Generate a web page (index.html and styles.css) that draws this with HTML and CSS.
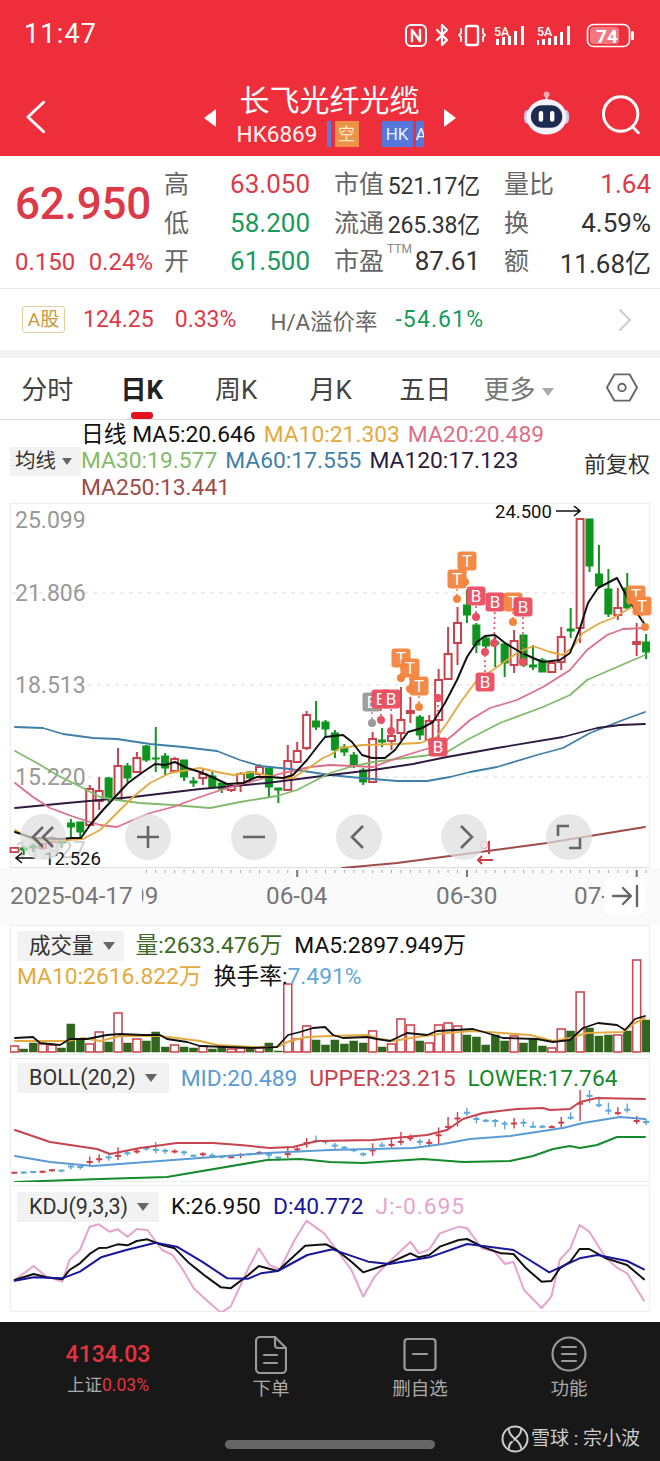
FILE: index.html
```html
<!DOCTYPE html>
<html lang="zh-CN">
<head>
    <meta charset="UTF-8">
    <meta name="viewport" content="width=device-width, initial-scale=1.0">
    <title>长飞光纤光缆 HK6869</title>
    <link rel="stylesheet" href="styles.css">
</head>
<body>
    <header class="topbar">
        <div class="status-row">
            <span class="clock">11:47</span>
            <svg class="status-icons" viewBox="400 20 240 30" width="240" height="30">
                <g fill="none" stroke="#fff" stroke-width="2" stroke-linecap="round" stroke-linejoin="round">
                    <rect x="406" y="25" width="20" height="21" rx="5"/>
                    <path d="M412 41V30l8 11V30" stroke-width="2.4"/>
                    <path d="M437 30l10 10-5 5V25l5 5-10 10" stroke-width="2.2"/>
                    <rect x="466" y="26" width="12" height="19" rx="2" stroke-width="2.4"/>
                    <path d="M461 29v4l-2 2 2 2v4M483 29v4l2 2-2 2v4" stroke-width="1.8"/>
                </g>
                <g fill="#fff">
                    <text class="net" x="494" y="36">5A</text>
                    <rect x="496" y="39" width="3" height="6"/><rect x="502" y="37" width="3" height="8"/>
                    <rect x="508" y="36" width="3" height="9"/><rect x="514" y="31" width="3" height="14"/>
                    <rect x="521" y="26" width="3" height="19"/>
                    <text class="net" x="537" y="36">5A</text>
                    <rect x="537" y="40" width="2" height="5"/><rect x="542" y="39" width="3" height="6"/>
                    <rect x="548" y="38" width="3" height="7"/><rect x="554" y="36" width="3" height="9"/>
                    <rect x="560" y="32" width="3" height="13"/><rect x="567" y="26" width="3" height="19"/>
                </g>
                <rect x="587.5" y="24.5" width="42" height="22" rx="6" fill="none" stroke="#fff" stroke-width="1.6"/>
                <rect x="590" y="27" width="29" height="17" rx="4" fill="#fff" opacity=".35"/>
                <rect x="631" y="31" width="3" height="9" rx="1.5" fill="#fff"/>
                <text class="batt" x="607" y="43" text-anchor="middle">74</text>
            </svg>
        </div>
        <nav class="nav-row">
            <svg class="back" viewBox="0 0 24 36" width="24" height="36" fill="none" stroke="#fff" stroke-width="3" stroke-linecap="round" stroke-linejoin="round">
                <path d="M20 3L4 18l16 15"/>
            </svg>
            <div class="stock-switch">
                <span class="tri tri-left"></span>
                <div class="stock-name">
                    <h1>长飞光纤光缆</h1>
                    <div class="stock-code">
                        <span class="code">HK6869</span>
                        <span class="tag-bar"></span>
                        <span class="tag tag-orange">空</span>
                        <span class="tag tag-blue">HK</span>
                        <span class="tag tag-cut">A</span>
                    </div>
                </div>
                <span class="tri tri-right"></span>
            </div>
            <svg class="robot" viewBox="0 0 48 46" width="48" height="46">
                <circle cx="24" cy="4" r="3" fill="#f3a9b4"/>
                <path d="M24 6v6" stroke="#e7e3f4" stroke-width="2"/>
                <ellipse cx="4" cy="27" rx="3" ry="7" fill="#c9c4ee"/>
                <ellipse cx="44" cy="27" rx="3" ry="7" fill="#c9c4ee"/>
                <ellipse cx="24" cy="27" rx="20.5" ry="18" fill="#f4f3fb"/>
                <rect x="8" y="15" width="32" height="23" rx="11.5" fill="#1d2a52"/>
                <rect x="16" y="21" width="4.5" height="11" rx="2.2" fill="#fff"/>
                <rect x="27.5" y="21" width="4.5" height="11" rx="2.2" fill="#fff"/>
            </svg>
            <svg class="search" viewBox="0 0 42 42" width="42" height="42" fill="none" stroke="#fff" stroke-width="3" stroke-linecap="round">
                <circle cx="20" cy="20" r="17.5"/>
                <path d="M32 33l6 6"/>
            </svg>
        </nav>
    </header>

    <section class="quote">
        <div class="quote-price">
            <div class="big-price">62.950</div>
            <div class="price-change"><span>0.150</span><span>0.24%</span></div>
        </div>
        <div class="quote-grid">
            <span class="q-label">高</span><span class="q-val up">63.050</span>
            <span class="q-label pad">市值</span><span class="q-num small">521.17亿</span>
            <span class="q-label pad">量比</span><span class="q-val up">1.64</span>

            <span class="q-label">低</span><span class="q-val down">58.200</span>
            <span class="q-label pad">流通</span><span class="q-num small">265.38亿</span>
            <span class="q-label pad">换</span><span class="q-num">4.59%</span>

            <span class="q-label">开</span><span class="q-val down">61.500</span>
            <span class="q-label pad ttm-label">市盈<sup class="ttm">TTM</sup></span><span class="q-num">87.61</span>
            <span class="q-label pad">额</span><span class="q-num">11.68亿</span>
        </div>
    </section>

    <section class="premium">
        <span class="a-tag">A股</span>
        <span class="prem-price up">124.25</span>
        <span class="prem-pct up">0.33%</span>
        <span class="prem-label">H/A溢价率</span>
        <span class="prem-rate down">-54.61%</span>
        <svg class="prem-more" viewBox="0 0 14 24" width="14" height="24" fill="none" stroke="#ccc" stroke-width="2" stroke-linecap="round" stroke-linejoin="round">
            <path d="M2 2l10 10L2 22"/>
        </svg>
    </section>

    <div class="band"></div>

    <div class="tabs">
        <span class="tab">分时</span>
        <span class="tab active">日K</span>
        <span class="tab">周K</span>
        <span class="tab">月K</span>
        <span class="tab">五日</span>
        <span class="tab more">更多<i class="caret"></i></span>
        <svg class="hex" viewBox="0 0 34 30" width="32" height="29" fill="none" stroke="#666" stroke-width="2" stroke-linejoin="round">
            <path d="M9 1h16l8 14-8 14H9L1 15z"/>
            <circle cx="17" cy="15" r="4"/>
        </svg>
    </div>

    <section class="legend">
        <span class="chip legend-chip">均线<i class="caret dark"></i></span>
        <div class="legend-lines">
            <div><span class="c-black">日线 MA5:20.646</span><span class="c-ma10">MA10:21.303</span><span class="c-ma20">MA20:20.489</span></div>
            <div><span class="c-ma30">MA30:19.577</span><span class="c-ma60">MA60:17.555</span><span class="c-ma120">MA120:17.123</span></div>
            <div><span class="c-ma250">MA250:13.441</span></div>
        </div>
        <span class="adjust">前复权</span>
    </section>

    <section class="chart-main">
        <svg id="main-chart" class="chart" viewBox="10 503 640 365">
            <g class="grid">
                <line x1="12" x2="648" y1="593" y2="593"/>
                <line x1="88" x2="648" y1="685" y2="685"/>
                <line x1="88" x2="648" y1="777" y2="777"/>
            </g>
            <g class="axis-y">
                <text x="15" y="528">25.099</text>
                <text x="15" y="601">21.806</text>
                <text x="15" y="693">18.513</text>
                <text x="15" y="785">15.220</text>
                <text x="15" y="858" opacity=".45">11.927</text>
            </g>
            <text class="peak" x="495" y="518">24.500</text>
            <path class="peak-arrow" d="M556 511h24m-6-5l6 5-6 5"/>
        </svg>
        <div class="zoom-btns">
            <span class="zoom-btn"><svg viewBox="0 0 46 46" width="46" height="46"><path d="M23 13l-10 10 10 10M33 13L23 23l10 10"/></svg></span>
            <span class="zoom-btn"><svg viewBox="0 0 46 46" width="46" height="46"><path d="M12 23h22M23 12v22"/></svg></span>
            <span class="zoom-btn"><svg viewBox="0 0 46 46" width="46" height="46"><path d="M12 23h22"/></svg></span>
            <span class="zoom-btn"><svg viewBox="0 0 46 46" width="46" height="46"><path d="M27 12L16 23l11 11"/></svg></span>
            <span class="zoom-btn"><svg viewBox="0 0 46 46" width="46" height="46"><path d="M20 12l11 11-11 11"/></svg></span>
            <span class="zoom-btn"><svg viewBox="0 0 46 46" width="46" height="46"><path d="M12 22v-10h11M34 24v10H23"/></svg></span>
        </div>
    </section>

    <section class="xaxis">
        <svg id="xaxis-ticks" class="chart" viewBox="0 868 660 57">
            <text x="131" y="904">09</text>
            <rect x="0" y="876" width="142" height="40" fill="#fafafa"/>
            <text x="10" y="904">2025-04-17</text>
            <text x="266" y="904">06-04</text>
            <text x="436" y="904">06-30</text>
            <text x="574" y="904">07-</text>
        </svg>
        <span class="jump-end">
            <svg viewBox="0 0 28 24" width="28" height="24" fill="none" stroke="#666" stroke-width="2.4" stroke-linecap="round" stroke-linejoin="round">
                <path d="M2 12h17m-7-8l8 8-8 8M26 2v20"/>
            </svg>
        </span>
    </section>

    <section class="panel panel-vol">
        <svg id="vol-chart" class="chart" viewBox="10 925 640 130"></svg>
        <div class="panel-head">
            <span class="chip">成交量<i class="caret dark"></i></span>
            <span class="c-vol">量:2633.476万</span>
            <span class="c-black">MA5:2897.949万</span>
        </div>
        <div class="panel-head second">
            <span class="c-ma10">MA10:2616.822万</span>
            <span class="c-black">换手率:<span class="c-rate">7.491%</span></span>
        </div>
    </section>

    <section class="panel panel-boll">
        <svg id="boll-chart" class="chart" viewBox="10 1058 640 124"></svg>
        <div class="panel-head">
            <span class="chip">BOLL(20,2)<i class="caret dark"></i></span>
            <span class="c-mid">MID:20.489</span>
            <span class="c-upper">UPPER:23.215</span>
            <span class="c-lower">LOWER:17.764</span>
        </div>
    </section>

    <section class="panel panel-kdj">
        <svg id="kdj-chart" class="chart" viewBox="10 1185 640 127"></svg>
        <div class="panel-head">
            <span class="chip">KDJ(9,3,3)<i class="caret dark"></i></span>
            <span class="c-black">K:26.950</span>
            <span class="c-d">D:40.772</span>
            <span class="c-j">J:-0.695</span>
        </div>
    </section>

    <footer class="dock">
        <div class="dock-item index">
            <div class="index-val">4134.03</div>
            <div class="index-name">上证<span>0.03%</span></div>
        </div>
        <div class="dock-item">
            <svg viewBox="0 0 32 38" width="32" height="38" fill="none" stroke="#999" stroke-width="2.2" stroke-linejoin="round" stroke-linecap="round">
                <path d="M5 1h15l11 11v21a4 4 0 0 1-4 4H5a4 4 0 0 1-4-4V5a4 4 0 0 1 4-4z"/>
                <path d="M20 1v8a3 3 0 0 0 3 3h8M9 19h13M9 27h13"/>
            </svg>
            <span>下单</span>
        </div>
        <div class="dock-item">
            <svg viewBox="0 0 34 38" width="34" height="38" fill="none" stroke="#999" stroke-width="2.2" stroke-linecap="round">
                <rect x="1.5" y="3" width="31" height="31" rx="3"/>
                <path d="M10 18h14"/>
            </svg>
            <span>删自选</span>
        </div>
        <div class="dock-item">
            <svg viewBox="0 0 36 38" width="36" height="38" fill="none" stroke="#999" stroke-width="2.2" stroke-linecap="round">
                <circle cx="18" cy="18" r="16.5"/>
                <path d="M11 11h14M11 18h14M11 25h14"/>
            </svg>
            <span>功能</span>
        </div>
        <div class="home-bar"></div>
        <div class="watermark">
            <svg viewBox="0 0 28 28" width="28" height="28" fill="none" stroke="#ccc" stroke-width="2" stroke-linecap="round">
                <circle cx="14" cy="14" r="12.5"/>
                <path d="M8 5c0 8 12 10 12 18M20 5C20 11 15 12 13 15M8 23c0-3 1-5 3-6"/>
            </svg>
            <span>雪球 : 宗小波</span>
        </div>
    </footer>

    <script src="chart.js"></script>
</body>
</html>
```

FILE: styles.css
```css
:root {
    --red: #ee2f3b;
    --up: #dc3a48;
    --down: #1a9a5c;
    --text: #333333;
    --muted: #666666;
    --line: #eeeeee;
    --sans: Roboto, "Noto Sans CJK SC", sans-serif;
}

* {
    box-sizing: border-box;
}

body {
    margin: 0;
    width: 660px;
    height: 1461px;
    overflow: hidden;
    background-color: #ffffff;
    color: var(--text);
    font-family: var(--sans);
}

.up { color: var(--up); }
.down { color: var(--down); }

/* top red bar */
.topbar {
    height: 156px;
    background-color: var(--red);
    color: #ffffff;
}

.status-row {
    height: 66px;
    padding: 20px 20px 0 24px;
    display: flex;
    justify-content: space-between;
    align-items: flex-start;
}

.clock {
    font-size: 27px;
    line-height: 28px;
    letter-spacing: 1.2px;
}

.net {
    font: 500 12.5px Roboto, sans-serif;
}

.batt {
    font: 700 19px Roboto, sans-serif;
    fill: #fff;
}

.nav-row {
    height: 90px;
    display: flex;
    align-items: center;
    padding: 0 18px 0 24px;
}

.back {
    margin-top: 12px;
}

.stock-switch {
    display: flex;
    align-items: center;
    margin-left: 156px;
    margin-top: 7px;
}

.tri {
    width: 0;
    height: 0;
    border-top: 9px solid transparent;
    border-bottom: 9px solid transparent;
    margin-top: 6px;
}

.tri-left {
    border-right: 12px solid #ffffff;
}

.tri-right {
    border-left: 12px solid #ffffff;
    margin-left: 19px;
}

.stock-name {
    width: 188px;
    margin-left: 21px;
}

.stock-name h1 {
    margin: 0;
    font-size: 30px;
    font-weight: 400;
    line-height: 36px;
    padding-left: 3px;
    white-space: nowrap;
}

.stock-code {
    display: flex;
    align-items: center;
    height: 26px;
    margin-top: 2px;
    white-space: nowrap;
}

.code {
    font-size: 22.5px;
    width: 90px;
    opacity: .95;
}

.tag-bar {
    width: 4px;
    height: 26px;
    background-color: #5c7fd6;
    margin-right: 4px;
}

.tag {
    display: block;
    height: 26px;
    line-height: 26px;
    font-size: 17px;
    text-align: center;
}

.tag-orange {
    width: 24px;
    background-color: #eb9247;
    color: #ffe8c8;
}

.tag-blue {
    width: 31px;
    margin-left: 23px;
    background-color: #5577d9;
    color: #eaf0ff;
}

.tag-cut {
    width: 8px;
    margin-left: 3px;
    overflow: hidden;
    background-color: #5577d9;
    color: #eaf0ff;
}

.robot {
    margin-left: 67px;
    margin-top: 4px;
}

.search {
    margin-left: 31px;
    margin-top: 8px;
}

/* quote block */
.quote {
    height: 133px;
    display: flex;
    padding: 9px 9px 0 15px;
    border-bottom: 1px solid #e6e6e6;
}

.quote-price {
    width: 149px;
    flex: none;
}

.big-price {
    color: var(--up);
    font-size: 44px;
    font-weight: 500;
    line-height: 50px;
    margin-top: 14px;
    letter-spacing: -.2px;
}

.price-change {
    display: flex;
    justify-content: space-between;
    width: 138px;
    margin-top: 19px;
    color: var(--up);
    font-size: 24px;
    line-height: 28px;
}

.quote-grid {
    flex: 1;
    display: grid;
    grid-template-columns: 40px 106px 75px 95px 75px 96px;
    grid-auto-rows: 38.5px;
    align-items: center;
}

.q-label {
    color: var(--muted);
    font-size: 25px;
    margin-bottom: 4px;
    white-space: nowrap;
}

.q-label.pad {
    padding-left: 24px;
}

.q-val, .q-num {
    font-size: 26px;
    text-align: right;
    white-space: nowrap;
}

.q-num {
    color: var(--text);
}

.q-num.small {
    font-size: 23px;
    letter-spacing: -.2px;
}

.ttm-label {
    position: relative;
}

.ttm {
    position: absolute;
    top: 1px;
    left: 77px;
    font-size: 12px;
    color: #888888;
}

/* A share strip */
.premium {
    height: 61px;
    display: flex;
    align-items: center;
    padding: 0 28px 0 22px;
    font-size: 23px;
}

.a-tag {
    width: 43px;
    height: 27px;
    line-height: 25px;
    text-align: center;
    font-size: 19px;
    color: #c9983b;
    border: 1px solid #e2cf9f;
    border-radius: 3px;
}

.prem-price { margin-left: 18px; }
.prem-pct { margin-left: 21px; }

.prem-label {
    margin-left: 34px;
    color: var(--muted);
    font-size: 22.4px;
}

.prem-rate {
    margin-left: 18px;
    letter-spacing: 1.1px;
}

.prem-more {
    margin-left: auto;
}

.band {
    height: 8px;
    background-color: #f3f3f3;
}

/* period tabs */
.tabs {
    height: 62px;
    display: flex;
    align-items: center;
    border-bottom: 1px solid #dddddd;
    padding-bottom: 2px;
    position: relative;
}

.tab {
    width: 94.5px;
    text-align: center;
    font-size: 26px;
    color: #444444;
    flex: none;
    position: relative;
}

.tab.active {
    font-weight: 700;
    color: #222222;
}

.tab.active::after {
    content: "";
    position: absolute;
    left: 36px;
    bottom: -13px;
    width: 22px;
    height: 7px;
    border-radius: 3px;
    background-color: #e2121e;
}

.tab.more {
    color: #777777;
    white-space: nowrap;
    text-align: left;
    padding-left: 11px;
}

.caret {
    display: inline-block;
    width: 0;
    height: 0;
    margin-left: 6px;
    vertical-align: 3px;
    border-left: 6px solid transparent;
    border-right: 6px solid transparent;
    border-top: 8px solid #aaaaaa;
}

.caret.dark {
    border-top-color: #666666;
    margin-left: 9px;
}

.hex {
    margin-left: 39px;
}

/* moving average legend */
.legend {
    height: 83px;
    display: flex;
    align-items: center;
    font-size: 22.8px;
    padding-left: 10px;
}

.chip {
    display: inline-block;
    background-color: #f2f2f2;
    color: #333333;
    font-size: 21.5px;
    white-space: nowrap;
}

.legend-chip {
    width: 71px;
    height: 29px;
    line-height: 29px;
    padding-left: 5px;
    flex: none;
    font-size: 20.5px;
}

.legend-chip .caret {
    margin-left: 6px;
    border-left-width: 5px;
    border-right-width: 5px;
    border-top-width: 7px;
}

.legend-lines {
    flex: 1;
    line-height: 26.5px;
    white-space: nowrap;
}

.legend-lines span {
    margin-right: 8px;
}

.adjust {
    font-size: 22px;
    color: #333333;
    padding-right: 10px;
}

.c-black { color: #111111; }
.c-ma10 { color: #e3aa3e; }
.c-ma20 { color: #dd6f88; }
.c-ma30 { color: #82bb6c; }
.c-ma60 { color: #3f7fa8; }
.c-ma120 { color: #2d1b3f; }
.c-ma250 { color: #9e4c48; }
.c-vol { color: #3b6a26; }
.c-rate { color: #5fa8d8; }
.c-mid { color: #5b9bd5; }
.c-upper { color: #c8434e; }
.c-lower { color: #148a2c; }
.c-d { color: #17179a; }
.c-j { color: #e6a3cf; letter-spacing: 1px; }

/* charts */
.chart {
    display: block;
    width: 100%;
    height: 100%;
}

.chart-main {
    position: relative;
    height: 365px;
    margin: 0 10px;
    border: 1px solid var(--line);
    border-bottom-color: #dddddd;
}

.chart-main .chart {
    position: absolute;
    left: -1px;
    top: -1px;
    width: 640px;
    height: 365px;
    overflow: visible;
}

.grid line {
    stroke: #dddddd;
    stroke-dasharray: 4 5;
}

.axis-y text {
    font: 23px Roboto, sans-serif;
    fill: #999999;
}

.peak {
    font: 18.5px Roboto, sans-serif;
    fill: #111111;
}

.peak-arrow {
    fill: none;
    stroke: #111111;
    stroke-width: 1.6;
}

.zoom-btns {
    position: absolute;
    left: 9px;
    top: 310px;
    display: flex;
    gap: 59.3px;
}

.zoom-btn {
    display: block;
    width: 46px;
    height: 46px;
    border-radius: 50%;
    background-color: rgba(222, 222, 222, .72);
}

.zoom-btn path {
    fill: none;
    stroke: #666666;
    stroke-width: 2.6;
}

.xaxis {
    position: relative;
    height: 57px;
    background-color: #fafafa;
}

.xaxis text {
    font: 24.3px Roboto, sans-serif;
    fill: #777777;
}

.jump-end {
    position: absolute;
    left: 604px;
    top: 9px;
    width: 41px;
    height: 38px;
    display: flex;
    align-items: center;
    justify-content: center;
    background-color: #ffffff;
    border-radius: 6px;
}

.panel {
    position: relative;
    margin: 0 10px;
    border: 1px solid var(--line);
    font-size: 22.8px;
    padding-left: 6px;
    white-space: nowrap;
}

.panel .chart {
    position: absolute;
    left: -1px;
    top: -1px;
    width: 640px;
    height: calc(100% + 2px);
}

.panel-vol { height: 130px; }

.panel-boll {
    height: 124px;
    margin-top: 3px;
}

.panel-kdj {
    height: 127px;
    margin-top: 3px;
}

.panel-head {
    position: relative;
    display: flex;
    align-items: center;
    gap: 12px;
    padding-top: 5px;
    line-height: 30px;
}

.panel-head.second {
    padding-top: 1px;
    gap: 13px;
}

.panel-head .chip {
    height: 30px;
    line-height: 30px;
    padding: 0 12px;
}

.panel-vol .panel-head .chip {
    padding-right: 9px;
}

.panel-vol .panel-head {
    gap: 12px;
}

.panel-kdj .panel-head .chip {
    padding-right: 10px;
}

.panel-boll .panel-head {
    padding-top: 2px;
}

.panel-boll .panel-head > span:not(.chip) {
    padding-top: 3px;
}

.panel-kdj .panel-head {
    padding-top: 6px;
}

/* bottom dock */
.dock {
    position: absolute;
    left: 0;
    top: 1322px;
    width: 660px;
    height: 139px;
    background-color: #181818;
    display: flex;
    padding: 14px 0 0 19.5px;
    color: #aaaaaa;
    font-size: 18.5px;
}

.dock-item {
    width: 149px;
    display: flex;
    flex-direction: column;
    align-items: center;
}

.dock-item.index {
    width: 177px;
    padding-top: 2px;
}

.dock-item span {
    margin-top: 2px;
    line-height: 26px;
}

.index-val {
    color: #e5323e;
    font-size: 23px;
    font-weight: 500;
    line-height: 34px;
}

.index-name {
    line-height: 24px;
    margin-top: 0;
    font-size: 17.5px;
}

.index-name span {
    color: #e5323e;
    margin-top: 0;
}

.home-bar {
    position: absolute;
    left: 225px;
    top: 118px;
    width: 210px;
    height: 9px;
    border-radius: 5px;
    background-color: #666666;
}

.watermark {
    position: absolute;
    right: 20px;
    top: 103px;
    display: flex;
    align-items: center;
    gap: 2px;
    color: #cccccc;
    font-size: 19px;
}

.watermark span {
    line-height: 28px;
}
```

FILE: chart.js
```js
const NS = 'http://www.w3.org/2000/svg';

function add(parent, tag, attrs, text) {
    const el = document.createElementNS(NS, tag);
    for (const k in attrs) el.setAttribute(k, attrs[k]);
    if (text) el.textContent = text;
    parent.appendChild(el);
    return el;
}

function line(parent, pts, color, width) {
    add(parent, 'polyline', {
        points: pts.map(p => p.join(',')).join(' '),
        fill: 'none',
        stroke: color,
        'stroke-width': width || 1.8,
        'stroke-linejoin': 'round',
        'stroke-linecap': 'round'
    });
}

const RED = '#c9434f';
const GREEN = '#0f9420';
const xAt = i => 14.3 + 9.43 * i;

// kind (r/g), body top, body bottom, wick top, wick bottom
const candles = [
    ['r', 848, 852, 848, 852], ['g', 848, 850, 846, 855], ['g', 846, 848, 844, 852],
    ['r', 844, 848, 842, 850], ['r', 838, 842, 836, 846], ['g', 840, 843, 838, 848],
    ['g', 823, 827, 819, 837], ['g', 822, 832, 822, 837], ['r', 789, 825, 785, 825],
    ['r', 791, 801, 777, 810], ['g', 778, 799, 777, 802], ['r', 766, 799, 748, 799],
    ['g', 766, 778, 763, 782], ['r', 758, 772, 752, 773], ['g', 746, 760, 745, 762],
    ['g', 758, 759, 727, 772], ['g', 756, 768, 753, 775], ['r', 759, 771, 757, 773],
    ['g', 760, 777, 760, 781], ['g', 781, 783, 777, 787], ['r', 774, 778, 768, 785],
    ['g', 776, 787, 772, 788], ['g', 783, 789, 783, 793], ['r', 786, 790, 784, 792],
    ['r', 774, 783, 772, 792], ['g', 772, 778, 771, 782], ['r', 767, 774, 764, 777],
    ['g', 768, 787, 768, 797], ['g', 788, 790, 788, 803], ['r', 761, 790, 745, 790],
    ['r', 751, 762, 742, 763], ['r', 715, 748, 711, 750], ['g', 721, 727, 701, 730],
    ['g', 722, 729, 720, 737], ['g', 733, 750, 730, 758], ['g', 747, 752, 744, 756],
    ['g', 755, 765, 752, 768], ['g', 770, 782, 768, 785], ['r', 739, 782, 732, 782],
    ['g', 740, 742, 728, 747], ['r', 736, 741, 715, 750], ['r', 720, 733, 687, 740],
    ['r', 711, 713, 697, 723], ['g', 717, 735, 715, 740], ['r', 721, 740, 715, 745],
    ['r', 680, 720, 669, 738], ['r', 654, 679, 627, 680], ['r', 623, 643, 607, 665],
    ['g', 605, 615, 590, 623], ['g', 625, 645, 623, 653], ['g', 638, 646, 635, 648],
    ['g', 642, 644, 635, 667], ['g', 644, 663, 643, 677], ['r', 641, 665, 630, 673],
    ['g', 635, 665, 635, 667], ['g', 665, 667, 645, 670], ['g', 660, 672, 658, 672],
    ['r', 663, 672, 660, 672], ['r', 637, 662, 627, 670], ['g', 629, 631, 608, 638],
    ['r', 519, 628, 519, 643], ['g', 519, 566, 519, 572], ['g', 574, 586, 545, 588],
    ['g', 589, 614, 569, 617], ['r', 608, 615, 588, 620], ['g', 588, 608, 573, 610],
    ['r', 642, 644, 623, 656], ['g', 642, 652, 634, 659]
];

// top of each volume bar, the baseline is y 1052
const volumes = [
    1046, 1049, 1043, 1044, 1045, 1048, 1024, 1040, 1044, 1032, 1042, 1013, 1043, 1039,
    1041, 1032, 1047, 1045, 1047, 1048, 1046, 1049, 1047, 1049, 1048, 1048, 1048, 1043,
    1051, 984, 1039, 1026, 1040, 1045, 1040, 1044, 1041, 1043, 1031, 1047, 1044, 1019,
    1025, 1041, 1043, 1025, 1023, 1026, 1035, 1037, 1045, 1035, 1041, 1036, 1043, 1039,
    1046, 1048, 1029, 1031, 992, 1028, 1036, 1035, 1035, 1031, 960, 1020
];

const ma = {
    ma250: [[342, 868], [397, 863], [480, 852], [547, 843], [645, 827]],
    ma60: [[15, 727], [43, 728], [63, 734], [93, 738], [117, 739], [150, 744], [183, 747], [217, 751], [240, 760], [260, 766], [290, 769], [330, 775], [350, 777], [373, 779], [397, 781], [427, 781], [450, 777], [470, 772], [497, 767], [537, 755], [563, 748], [590, 733], [623, 720], [645, 712]],
    ma120: [[15, 808], [67, 803], [133, 797], [200, 789], [267, 783], [330, 775], [373, 770], [413, 764], [447, 757], [497, 748], [563, 737], [597, 728], [620, 725], [645, 724]],
    ma30: [[15, 751], [37, 763], [57, 775], [83, 788], [100, 797], [117, 800], [140, 803], [173, 805], [210, 808], [240, 802], [277, 796], [297, 790], [330, 773], [350, 767], [373, 762], [397, 759], [430, 755], [447, 752], [467, 740], [500, 723], [543, 707], [570, 695], [587, 680], [617, 667], [645, 655]],
    ma20: [[15, 783], [33, 797], [50, 808], [77, 818], [100, 825], [117, 827], [133, 820], [150, 813], [173, 807], [200, 797], [227, 788], [250, 782], [283, 773], [310, 767], [330, 765], [353, 766], [373, 767], [397, 758], [423, 750], [440, 745], [453, 735], [470, 720], [490, 708], [517, 700], [543, 687], [570, 670], [587, 650], [607, 635], [623, 629], [645, 628]],
    ma10: [[15, 830], [33, 840], [67, 840], [83, 839], [100, 830], [113, 817], [133, 797], [150, 783], [170, 773], [200, 768], [217, 772], [233, 775], [253, 772], [277, 778], [293, 778], [310, 767], [323, 758], [330, 755], [340, 748], [363, 745], [397, 744], [420, 743], [437, 737], [447, 723], [460, 703], [477, 680], [493, 670], [517, 653], [533, 646], [550, 652], [563, 655], [573, 647], [583, 633], [600, 623], [613, 618], [630, 608]],
    ma5: [[15, 832], [33, 838], [60, 839], [72, 838], [81, 838], [90, 825], [103, 810], [115, 797], [128, 783], [143, 772], [155, 764], [165, 765], [175, 762], [187, 768], [200, 772], [212, 777], [227, 784], [243, 783], [257, 777], [270, 777], [283, 778], [293, 775], [307, 760], [317, 747], [325, 737], [343, 735], [352, 742], [362, 755], [372, 758], [385, 758], [395, 750], [408, 732], [422, 728], [433, 722], [445, 703], [457, 680], [467, 657], [477, 642], [485, 636], [495, 635], [505, 643], [520, 652], [533, 658], [543, 662], [560, 660], [570, 653], [580, 628], [588, 603], [598, 588], [617, 578], [627, 597], [637, 613], [645, 625]]
};

// label, x, y of the tag, then x, y of its dot
const marks = [
    ['B', 372, 702, 372, 723, '#9a9a9a'], ['B', 381, 699, 381, 720], ['B', 391, 699, 391, 731],
    ['T', 401, 658, 401, 678], ['T', 410, 668, 410, 689], ['T', 419, 686, 419, 707],
    ['B', 438, 747, 438, 698], ['T', 457, 579, 457, 599], ['T', 467, 561, 465, 582],
    ['B', 476, 596, 476, 617], ['B', 495, 602, 494, 643], ['B', 485, 682, 485, 652],
    ['T', 513, 602, 513, 622], ['B', 523, 607, 523, 662], ['T', 636, 595, 645, 627],
    ['T', 642, 606, 642, 606]
];

// main chart
const main = document.getElementById('main-chart');
candles.forEach((c, i) => {
    const x = xAt(i);
    const color = c[0] === 'r' ? RED : GREEN;
    add(main, 'line', { x1: x, x2: x, y1: c[3], y2: c[4], stroke: color, 'stroke-width': 2 });
    add(main, 'rect', {
        x: x - 3.5, y: c[1], width: 7, height: c[2] - c[1],
        fill: c[0] === 'r' ? '#fff' : color,
        stroke: color,
        'stroke-width': c[0] === 'r' ? 2 : 1
    });
});
line(main, ma.ma250, '#9e4c48');
line(main, ma.ma60, '#3f7fa8');
line(main, ma.ma120, '#2d1b3f');
line(main, ma.ma30, '#82bb6c');
line(main, ma.ma20, '#dd6f88');
line(main, ma.ma10, '#e3aa3e');
line(main, ma.ma5, '#111', 2);

marks.forEach(m => {
    const color = m[5] || (m[0] === 'T' ? '#f4853f' : '#e94f62');
    add(main, 'line', { x1: m[1], x2: m[3], y1: m[2], y2: m[4], stroke: color, 'stroke-width': 1.6, 'stroke-dasharray': '2 3' });
    add(main, 'circle', { cx: m[3], cy: m[4], r: 4, fill: color });
    add(main, 'rect', { x: m[1] - 9.5, y: m[2] - 9.5, width: 19, height: 19, rx: 3, fill: color, opacity: .96 });
    add(main, 'text', { x: m[1], y: m[2] + 6, fill: '#fff', 'text-anchor': 'middle', 'font-size': 17, 'font-family': 'Roboto, sans-serif' }, m[0]);
});

// lowest price labels
add(main, 'path', { d: 'M35 858H16m6-5l-6 5 6 5', fill: 'none', stroke: '#111', 'stroke-width': 1.6 });
add(main, 'text', { x: 44, y: 865, 'font-size': 18.5, fill: '#111', 'font-family': 'Roboto, sans-serif' }, '12.526');
add(main, 'rect', { x: 10.5, y: 848, width: 8, height: 4, fill: '#fff', stroke: RED, 'stroke-width': 1.6 });
add(main, 'path', { d: 'M489 841v13M493 860h-15m4-4l-4 4 4 4', fill: 'none', stroke: '#d23a45', 'stroke-width': 2 });
add(main, 'circle', { cx: 484, cy: 845, r: 3.5, fill: 'none', stroke: '#eba9ad', 'stroke-width': 1.5 });

// ticks below the main chart
const ticks = document.getElementById('xaxis-ticks');
for (let i = 14; i < 68; i++) {
    const major = i === 30 || i === 48 || i === 66;
    add(ticks, 'line', { x1: xAt(i), x2: xAt(i), y1: 870, y2: major ? 877 : 873, stroke: major ? '#777' : '#aaa', 'stroke-width': major ? 2 : 1 });
}

// volume
const vol = document.getElementById('vol-chart');
volumes.forEach((top, i) => {
    const isUp = candles[i][0] === 'r';
    add(vol, 'rect', {
        x: xAt(i) - 4, y: top, width: 8, height: 1052 - top,
        fill: isUp ? '#fff' : '#31661f',
        stroke: isUp ? '#ce4a52' : '#31661f',
        'stroke-width': isUp ? 1.6 : .5
    });
});
line(vol, [[15, 1041], [67, 1041], [83, 1038], [100, 1041], [120, 1036], [160, 1036], [200, 1041], [217, 1045], [253, 1047], [277, 1047], [290, 1041], [307, 1037], [330, 1036], [367, 1035], [380, 1039], [393, 1041], [417, 1037], [447, 1033], [473, 1031], [530, 1035], [553, 1041], [570, 1038], [587, 1033], [623, 1032], [635, 1023], [645, 1018]], '#e3aa3e', 2);
line(vol, [[15, 1038], [33, 1037], [40, 1043], [60, 1045], [70, 1039], [87, 1039], [107, 1035], [120, 1034], [143, 1035], [160, 1035], [167, 1039], [187, 1042], [200, 1046], [227, 1047], [253, 1048], [277, 1047], [288, 1035], [300, 1032], [313, 1028], [325, 1027], [333, 1035], [343, 1038], [367, 1037], [377, 1039], [390, 1041], [407, 1033], [427, 1035], [437, 1031], [473, 1029], [487, 1033], [503, 1038], [537, 1039], [553, 1042], [570, 1040], [583, 1028], [598, 1023], [617, 1025], [625, 1030], [635, 1019], [645, 1016]], '#111', 1.8);

// boll, small candles follow the main chart at a quarter of its scale
const boll = document.getElementById('boll-chart');
const bollY = y => 1090 + (y - 519) * 0.25;
candles.forEach((c, i) => {
    const x = xAt(i);
    const color = c[0] === 'r' ? '#d03c48' : '#5ba8d8';
    add(boll, 'line', { x1: x, x2: x, y1: bollY(c[3]), y2: bollY(c[4]), stroke: color, 'stroke-width': 1.4 });
    add(boll, 'line', { x1: x - 3, x2: x + 3, y1: bollY((c[1] + c[2]) / 2), y2: bollY((c[1] + c[2]) / 2), stroke: color, 'stroke-width': 2 });
});
line(boll, [[15, 1182], [100, 1179], [167, 1177], [267, 1160], [300, 1159], [330, 1162], [363, 1163], [423, 1159], [463, 1162], [510, 1161], [533, 1156], [553, 1149], [570, 1146], [580, 1148], [597, 1145], [617, 1137], [645, 1137]], '#148a2c', 2);
line(boll, [[15, 1156], [50, 1162], [93, 1166], [133, 1163], [200, 1158], [267, 1153], [330, 1150], [413, 1148], [443, 1144], [470, 1139], [510, 1136], [563, 1128], [583, 1123], [620, 1117], [645, 1119]], '#5b9bd5', 2);
line(boll, [[15, 1130], [50, 1142], [97, 1149], [110, 1154], [140, 1148], [177, 1143], [213, 1143], [240, 1145], [270, 1148], [293, 1147], [317, 1141], [373, 1140], [427, 1135], [447, 1130], [463, 1119], [483, 1113], [517, 1109], [543, 1108], [550, 1110], [570, 1109], [580, 1102], [597, 1098], [645, 1099]], '#c8434e', 2);

// kdj, traced at 2.376 horizontally and 3 vertically
const kdj = document.getElementById('kdj-chart');
const kdjPts = flat => {
    const out = [];
    for (let i = 0; i < flat.length; i += 2) out.push([flat[i] / 2.376, 1180 + flat[i + 1] / 3]);
    return out;
};
line(kdj, kdjPts([35, 300, 80, 258, 110, 290, 148, 305, 165, 240, 190, 210, 213, 140, 235, 133, 260, 155, 280, 148, 303, 170, 325, 147, 350, 150, 385, 210, 410, 225, 435, 270, 460, 325, 490, 360, 525, 398, 548, 380, 590, 265, 615, 205, 640, 255, 665, 268, 700, 180, 728, 122, 770, 160, 800, 210, 835, 270, 863, 350, 890, 290, 925, 245, 975, 185, 995, 220, 1020, 208, 1045, 160, 1090, 140, 1110, 145, 1145, 205, 1175, 215, 1200, 252, 1220, 245, 1245, 330, 1287, 384, 1310, 350, 1330, 240, 1355, 205, 1377, 135, 1400, 155, 1440, 235, 1465, 262, 1490, 280, 1530, 362]), '#e6a3cf', 2);
line(kdj, kdjPts([35, 300, 80, 282, 110, 292, 148, 298, 165, 270, 190, 250, 215, 220, 235, 204, 255, 203, 280, 193, 303, 196, 325, 183, 350, 178, 385, 195, 415, 205, 450, 250, 490, 290, 525, 322, 548, 325, 590, 285, 615, 258, 660, 273, 725, 197, 775, 193, 800, 210, 835, 245, 863, 277, 915, 255, 975, 220, 995, 232, 1020, 225, 1045, 200, 1090, 180, 1110, 177, 1145, 200, 1190, 220, 1220, 222, 1250, 265, 1287, 305, 1310, 303, 1330, 265, 1355, 245, 1377, 207, 1400, 207, 1440, 235, 1490, 255, 1530, 298]), '#111', 2);
line(kdj, kdjPts([35, 302, 80, 292, 148, 295, 190, 275, 240, 232, 300, 210, 370, 188, 420, 200, 480, 245, 540, 295, 590, 296, 620, 280, 660, 273, 730, 225, 790, 208, 840, 230, 875, 245, 925, 252, 1020, 232, 1110, 192, 1220, 210, 1305, 277, 1377, 235, 1420, 225, 1490, 243, 1530, 268]), '#17179a', 2);
```
